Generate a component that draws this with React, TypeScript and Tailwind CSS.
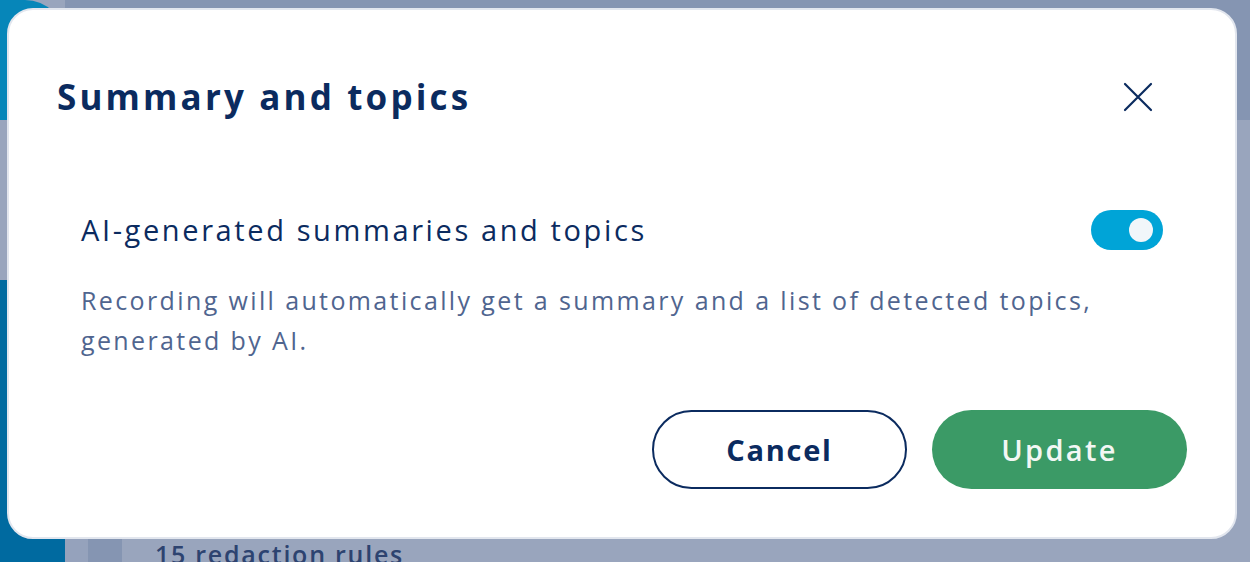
import { useState } from 'react'

const font = { fontFamily: '"Open Sans", "Noto Sans", sans-serif' }

function Toggle({ on, onChange }: { on: boolean; onChange: (v: boolean) => void }) {
  return (
    <button
      type="button"
      role="switch"
      aria-checked={on}
      onClick={() => onChange(!on)}
      className={`flex h-[40px] w-[72px] shrink-0 items-center rounded-full px-[10px] ${
        on ? 'justify-end bg-[#00a4d7]' : 'justify-start bg-[#c3cbd9]'
      }`}
    >
      <span className="h-[24px] w-[24px] rounded-full bg-[#f1f6fa]" />
    </button>
  )
}

function CloseIcon() {
  return (
    <svg width="30" height="30" viewBox="0 0 30 30" fill="none">
      <path d="M2 2L28 28M28 2L2 28" stroke="#0b2b5f" strokeWidth="2.2" strokeLinecap="round" />
    </svg>
  )
}

export default function App() {
  const [enabled, setEnabled] = useState(true)

  return (
    <div className="relative h-[562px] w-[1250px] overflow-hidden bg-[#99a5bd]" style={font}>
      {/* dimmed page behind the dialog */}
      <div className="flex h-full">
        <div className="flex w-[65px] flex-col">
          <div className="h-[120px] rounded-tr-[40px] bg-[#0686b9]" />
          <div className="h-[160px] bg-[#99a5bd]" />
          <div className="flex-1 bg-[#006aa0]" />
        </div>
        <div className="flex flex-1 flex-col">
          <div className="h-[120px] bg-[#8595b2]" />
          <div className="flex flex-1 justify-end">
            <div className="h-[155px] w-[13px] bg-[#99a5bd]" />
          </div>
          <div className="flex h-[287px] flex-col justify-end">
            <div className="flex h-[24px] items-start">
              <div className="h-full w-[23px] bg-[#95a2bc]" />
              <div className="h-full w-[34px] bg-[#8595b2]" />
              <span className="pl-[33px] text-[25px] leading-[32px] font-semibold tracking-[0.07em] text-[#2d4370]">
                15 redaction rules
              </span>
            </div>
          </div>
        </div>
      </div>

      {/* dialog */}
      <div className="absolute inset-0 pl-[7px] pt-[8px]">
        <div className="flex h-[531px] w-[1230px] flex-col rounded-[26px] border-2 border-[#e2e6ee] bg-white px-[48px] pt-[64px]">
          <div className="flex items-center justify-between pr-[34px]">
            <h2 className="text-[35px] leading-[46px] font-bold tracking-[0.09em] text-[#0b2b5f]">
              Summary and topics
            </h2>
            <button type="button" aria-label="Close" className="text-[#0b2b5f]">
              <CloseIcon />
            </button>
          </div>

          <div className="mt-[90px] flex items-center justify-between pl-[24px] pr-[24px]">
            <span className="text-[29px] leading-[40px] tracking-[0.09em] text-[#0b2b5f]">
              AI-generated summaries and topics
            </span>
            <Toggle on={enabled} onChange={setEnabled} />
          </div>

          <p className="mt-[30px] pl-[24px] pr-[60px] text-[25px] leading-[40px] tracking-[0.095em] text-[#50658f]">
            Recording will automatically get a summary and a list of detected topics, generated by AI.
          </p>

          <div className="mt-[50px] flex justify-end gap-[25px]">
            <button
              type="button"
              className="h-[79px] w-[255px] rounded-full border-2 border-[#0b2b5f] text-[29px] font-bold tracking-[0.06em] text-[#0b2b5f]"
            >
              Cancel
            </button>
            <button
              type="button"
              className="h-[79px] w-[255px] rounded-full bg-[#3b9a66] text-[29px] font-semibold tracking-[0.08em] text-[#f3f7f4]"
            >
              Update
            </button>
          </div>
        </div>
      </div>
    </div>
  )
}
